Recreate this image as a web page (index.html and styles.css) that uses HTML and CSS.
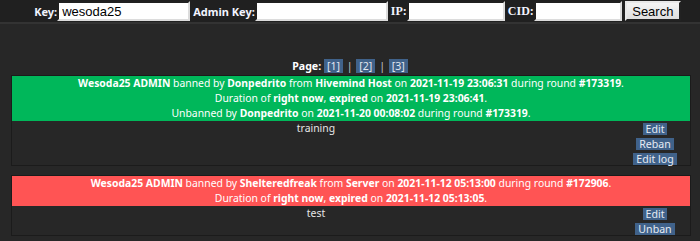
FILE: index.html
```html
<!DOCTYPE html>
<html lang="en">
<head>
    <meta charset="UTF-8">
    <title>Ban Panel</title>
    <link rel="stylesheet" href="styles.css">
</head>
<body>
    <!-- Search bar -->
    <form class="searchbar">
        <label class="lbl">Key:</label><input type="text" class="field key" value="wesoda25">
        <label class="lbl">Admin Key:</label><input type="text" class="field key">
        <label class="lbl serif">IP:</label><input type="text" class="field ip">
        <label class="lbl serif">CID:</label><input type="text" class="field cid">
        <button type="button" class="search">Search</button>
    </form>

    <div class="pages">
        <b>Page:</b> <a class="pagelink">[1]</a> <span class="sep">|</span> <a class="pagelink">[2]</a> <span class="sep">|</span> <a class="pagelink">[3]</a>
    </div>

    <!-- Ban 1 -->
    <table class="ban">
        <tr>
            <td colspan="2" class="head unbanned">
                <b>Wesoda25 ADMIN</b> banned by <b>Donpedrito</b> from <b>Hivemind Host</b> on <b>2021-11-19 23:06:31</b> during round <b>#173319</b>.<br>
                Duration of <b>right now</b>, <b>expired</b> on <b>2021-11-19 23:06:41</b>.<br>
                Unbanned by <b>Donpedrito</b> on <b>2021-11-20 00:08:02</b> during round <b>#173319</b>.
            </td>
        </tr>
        <tr>
            <td class="reason">training</td>
            <td class="actions">
                <div class="btns">
                    <a class="btn">Edit</a>
                    <a class="btn">Reban</a>
                    <a class="btn">Edit log</a>
                </div>
            </td>
        </tr>
    </table>

    <!-- Ban 2 -->
    <table class="ban">
        <tr>
            <td colspan="2" class="head active">
                <b>Wesoda25 ADMIN</b> banned by <b>Shelteredfreak</b> from <b>Server</b> on <b>2021-11-12 05:13:00</b> during round <b>#172906</b>.<br>
                Duration of <b>right now</b>, <b>expired</b> on <b>2021-11-12 05:13:05</b>.
            </td>
        </tr>
        <tr>
            <td class="reason">test</td>
            <td class="actions">
                <div class="btns">
                    <a class="btn">Edit</a>
                    <a class="btn">Unban</a>
                </div>
            </td>
        </tr>
    </table>
</body>
</html>
```
FILE: styles.css
```css
/* Colors */
:root {
    --page-bg: #272727;
    --bar-bg: #202020;
    --green: #00b75a;
    --red: #ff5454;
    --link-bg: #40628a;
    --text: #e6e6e6;
}

body {
    margin: 0;
    background: var(--page-bg);
    color: var(--text);
    font-family: "Noto Sans", Verdana, sans-serif;
    font-size: 10.4px;
    overflow: hidden;
}

/* Top search bar */
.searchbar {
    display: flex;
    align-items: center;
    justify-content: center;
    height: 22px;
    margin: 0;
    padding-left: 12px;
    background: var(--bar-bg);
    border-bottom: 2px solid #333;
}
.lbl {
    font-weight: bold;
    font-size: 11px;
    color: #f2f4ff;
    margin-left: 3px;
}
.lbl.serif {
    font-family: "Liberation Serif", serif;
    font-size: 12px;
}
.field {
    height: 20px;
    box-sizing: border-box;
    padding: 0 3px;
    border: 2px inset #cfcfcf;
    border-color: #767676 #dcdcdc #dcdcdc #767676;
    background: #fff;
    font-family: "Liberation Sans", Arial, sans-serif;
    font-size: 13px;
    color: #000;
}
.field.key { width: 133px; }
.field.ip { width: 98px; }
.field.cid { width: 88px; }
.search {
    margin-left: 3px;
    height: 20px;
    width: 56px;
    padding: 0;
    font-family: "Liberation Sans", Arial, sans-serif;
    font-size: 13px;
    color: #000;
    background: linear-gradient(#f4f4f4, #dedede);
    border: 2px outset #cfcfcf;
    border-color: #e8e8e8 #777 #777 #e8e8e8;
}

/* Paging */
.pages {
    text-align: center;
    margin: 35px 0 1px;
    line-height: 15px;
    font-size: 10.6px;
    color: #fff;
}
.pagelink {
    background: var(--link-bg);
    color: #e0e6f0;
    padding: 0 3px;
}
.sep {
    color: #c9c9c9;
    margin: 0 1px;
}

/* Ban entries */
.ban {
    width: 680px;
    margin: 0 10px 9px 11px;
    border-collapse: collapse;
    background: var(--page-bg);
    border: 1px solid #1b1b1b;
}
.ban td {
    padding: 0;
    line-height: 15px;
}
.head {
    text-align: center;
    color: #fff;
}
.head.unbanned { background: var(--green); }
.head.active { background: var(--red); }
.reason {
    text-align: center;
    vertical-align: top;
    color: #e6e6e6;
}
.actions {
    width: 70px;
    vertical-align: top;
}
.btns {
    display: flex;
    flex-direction: column;
    align-items: center;
    gap: 3px;
    padding: 2px 0 0;
}
.btn {
    display: block;
    background: var(--link-bg);
    color: #e6ecf4;
    padding: 0 3px;
    height: 12px;
    line-height: 12px;
    font-size: 10.6px;
}
```
